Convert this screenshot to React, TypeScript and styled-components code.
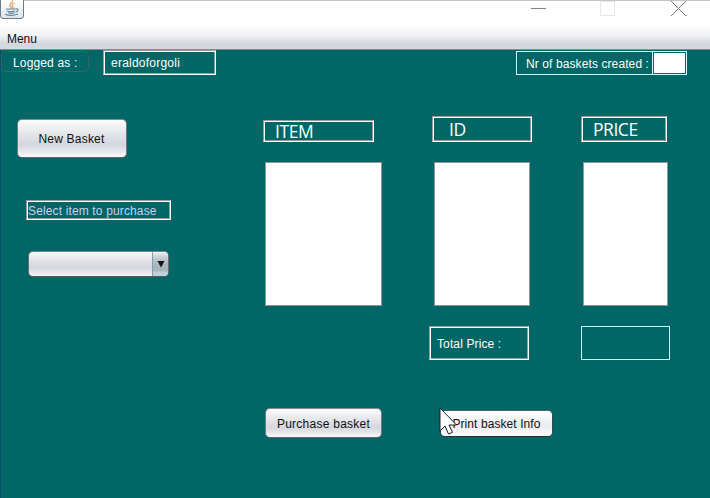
import React from 'react';
import styled, { createGlobalStyle, css } from 'styled-components';

const GlobalStyle = createGlobalStyle`
  * { box-sizing: border-box; }
  body { margin: 0; overflow: hidden; background: #006666; }
`;

const Window = styled.div`
  position: relative;
  width: 710px;
  height: 498px;
  display: flex;
  flex-direction: column;
  background: #006666;
  font-family: 'Liberation Sans', Arial, sans-serif;
  font-size: 12px;
  color: #fff;
  cursor: default;
  white-space: nowrap;
`;

const TitleBar = styled.header`
  height: 27px;
  flex: none;
  display: flex;
  justify-content: space-between;
  background: #fff;
  border-top: 1px solid #c4c4c4;
`;

const AppIcon = styled.svg`
  display: block;
  margin-top: -1px;
`;

const WindowControls = styled.svg`
  display: block;
  margin-right: 20px;
`;

const MenuBar = styled.nav`
  height: 23px;
  flex: none;
  display: flex;
  align-items: center;
  padding: 1px 0 0 7px;
  color: #111;
  letter-spacing: -0.05px;
  border-bottom: 1px solid #858a93;
  background: linear-gradient(#fafafa 0%, #f3f4f6 35%, #e2e4e9 58%, #d3d7de 75%, #d5d8df 100%);
`;

const Body = styled.main`
  flex: 1;
  display: flex;
  flex-direction: column;
  border-left: 1px solid #005070;
`;

const StatusRow = styled.div`
  height: 26px;
  display: flex;
  align-items: flex-start;
`;

const GhostButton = styled.div`
  width: 88px;
  height: 21px;
  margin-top: 1px;
  padding-left: 11px;
  line-height: 22px;
  letter-spacing: 0.15px;
  border: 1px solid #3f6262;
  border-radius: 5px;
`;

const etched = css`
  border: 1px solid;
  border-color: #959ba3 #fff #fff #959ba3;
  box-shadow: inset 1px 1px 0 #fff, inset -1px -1px 0 #959ba3;
`;

const Etched = styled.div<{ $w: number; $h: number; $pad: number; $line: number; $top?: number; $left?: number; $spacing?: number; $color?: string }>`
  ${etched}
  flex: none;
  width: ${p => p.$w}px;
  height: ${p => p.$h}px;
  margin-top: ${p => p.$top ?? 0}px;
  margin-left: ${p => p.$left ?? 0}px;
  padding-left: ${p => p.$pad}px;
  line-height: ${p => p.$line}px;
  letter-spacing: ${p => p.$spacing ?? 0}px;
  color: ${p => p.$color ?? '#fff'};
`;

const ColumnTitle = styled(Etched)`
  font-family: 'Open Sans', sans-serif;
  font-size: 17.5px;
  font-weight: 500;
  letter-spacing: -0.45px;
`;

const Counter = styled.div`
  display: flex;
  height: 24px;
  margin: 1px 0 0 300px;
  border: 1px solid #ccffff;
`;

const CounterLabel = styled.div`
  width: 136px;
  padding-left: 9px;
  line-height: 24px;
  letter-spacing: 0.1px;
`;

const CounterValue = styled.div`
  width: 33px;
  background: #fff;
  border: 1px solid #006666;
  outline: 1px solid #ccffff;
  outline-offset: 0;
`;

const Columns = styled.div`
  flex: 1;
  display: grid;
  grid-template-columns: 262px 166px 152px 1fr;
`;

const Column = styled.section`
  display: flex;
  flex-direction: column;
  align-items: flex-start;
`;

const Button = styled.button<{ $w: number; $h: number; $top: number; $left: number; $hot?: boolean }>`
  flex: none;
  width: ${p => p.$w}px;
  height: ${p => p.$h}px;
  margin: ${p => p.$top}px 0 0 ${p => p.$left}px;
  padding: 1px 0 0;
  border: 1px solid;
  border-color: ${p => (p.$hot ? '#53616a #354850 #26323b' : '#858a90 #737980 #5d646b')};
  border-radius: 5px;
  font: inherit;
  color: #111;
  background: ${p =>
    p.$hot
      ? 'linear-gradient(#fff 0%, #f3f4f6 35%, #e9ebef 60%, #fff 100%)'
      : 'linear-gradient(#fcfcfc 0%, #e9eaed 30%, #dedfe4 50%, #d4d7de 65%, #e2e4e8 82%, #fafafa 100%)'};
`;

const ButtonText = styled.span<{ $spacing?: number; $shift?: number }>`
  margin-left: ${p => p.$shift ?? 0}px;
  letter-spacing: ${p => p.$spacing ?? 0}px;
`;

const ComboBox = styled.div`
  flex: none;
  width: 141px;
  height: 26px;
  margin: 31px 0 0 27px;
  display: flex;
  justify-content: flex-end;
  overflow: hidden;
  border: 1px solid;
  border-color: #7c8288 #666d75 #555c66;
  border-radius: 5px;
  background: linear-gradient(#fafafa 0%, #e6e7eb 30%, #dbdde2 50%, #d4d7de 68%, #f5f6f7 100%);
`;

const ComboArrow = styled.div`
  width: 16px;
  display: flex;
  align-items: center;
  justify-content: center;
  border-left: 1px solid #829eb5;
  background: linear-gradient(#f1f3f5 0%, #c3ccd1 25%, #a9b8bf 50%, #a2b3ba 75%, #b9d0d8 85%, #c5d2d8 100%);
`;

const List = styled.div<{ $w: number; $left: number }>`
  flex: none;
  width: ${p => p.$w}px;
  height: 144px;
  margin: 20px 0 0 ${p => p.$left}px;
  background: #fff;
  border: 1px solid #92979f;
`;

const TotalValue = styled.div`
  width: 89px;
  height: 34px;
  margin-top: 20px;
  border: 1px solid #ccffff;
`;

const Pointer = styled.svg`
  position: absolute;
  left: 439px;
  top: 407px;
`;

export default function App() {
  return (
    <>
      <GlobalStyle />
      <Window>
        <TitleBar>
          <AppIcon width="24" height="20" viewBox="0 0 24 20" fill="none">
            <defs>
              <linearGradient id="tile" x2="0" y2="1">
                <stop stopColor="#fff" />
                <stop offset="1" stopColor="#dde4ea" />
              </linearGradient>
            </defs>
            <path d="M.5 0V16Q.5 18.5 3 18.5H21Q23.500 18.500 23.500 16V0" fill="url(#tile)" stroke="#687f90" />
            <path d="M12 0C14 3 8.500 3.500 10 6Q11.500 7.300 11 8.500M14.500 3C11.500 4.500 11.500 5.500 12.800 6.800Q13.300 7.800 12 8.500" stroke="#e3a85e" strokeWidth="1.2" />
            <path d="M6 9H15.500M7 11Q11 12.300 15 10.700M8 12.800Q11.500 14 14.500 12.500M15.500 9C19.500 8 18 12 15.500 12M5 14.200Q11 16.700 18 14" stroke="#66849e" strokeWidth="1.1" />
          </AppIcon>
          <WindowControls width="160" height="20" viewBox="0 0 160 20" fill="none">
            <path d="M1 7.5H16" stroke="#858585" />
            <path d="M70.5 .5H84.500V14.500H70.5Z" stroke="#e7e6ea" />
            <path d="M141 0L156 15M156 0L141 15" stroke="#777" />
          </WindowControls>
        </TitleBar>
        <MenuBar>Menu</MenuBar>
        <Body>
          <StatusRow>
            <GhostButton>Logged as :</GhostButton>
            <Etched $w={113} $h={25} $left={14} $pad={7} $line={24} $spacing={0.23}>eraldoforgoli</Etched>
            <Counter>
              <CounterLabel>Nr of baskets created :</CounterLabel>
              <CounterValue />
            </Counter>
          </StatusRow>
          <Columns>
            <Column>
              <Button $w={110} $h={39} $top={43} $left={16}>
                <ButtonText $shift={-1} $spacing={0.2}>New Basket</ButtonText>
              </Button>
              <Etched $w={145} $h={20} $top={42} $left={25} $pad={1} $line={20} $spacing={0.14} $color="#c9d1ee">
                Select item to purchase
              </Etched>
              <ComboBox>
                <ComboArrow>
                  <svg width="8" height="7" viewBox="0 0 8 7">
                    <path d="M0.500 0H7.500L4 6.500Z" fill="#151515" />
                  </svg>
                </ComboArrow>
              </ComboBox>
            </Column>
            <Column>
              <ColumnTitle $w={111} $h={22} $top={44} $pad={11} $line={21}>ITEM</ColumnTitle>
              <List $w={117} $left={2} />
              <Button $w={117} $h={30} $top={102} $left={2}>
                <ButtonText $spacing={0.25}>Purchase basket</ButtonText>
              </Button>
            </Column>
            <Column>
              <ColumnTitle $w={100} $h={26} $top={40} $left={3} $pad={16} $line={25}>ID</ColumnTitle>
              <List $w={96} $left={5} />
              <Etched $w={100} $h={34} $top={20} $pad={7} $line={34} $spacing={0.12}>Total Price :</Etched>
              <Button $w={113} $h={27} $top={50} $left={11} $hot>
                <ButtonText $spacing={0.08}>Print basket Info</ButtonText>
              </Button>
            </Column>
            <Column>
              <ColumnTitle $w={86} $h={26} $top={40} $pad={11} $line={25}>PRICE</ColumnTitle>
              <List $w={85} $left={2} />
              <TotalValue />
            </Column>
          </Columns>
        </Body>
        <Pointer width="19" height="29" viewBox="0 0 19 29">
          <path d="M1 1V24L6 19L9.500 27L13.500 25.300L10 18H17.500Z" fill="#fff" stroke="#17202e" />
        </Pointer>
      </Window>
    </>
  );
}
